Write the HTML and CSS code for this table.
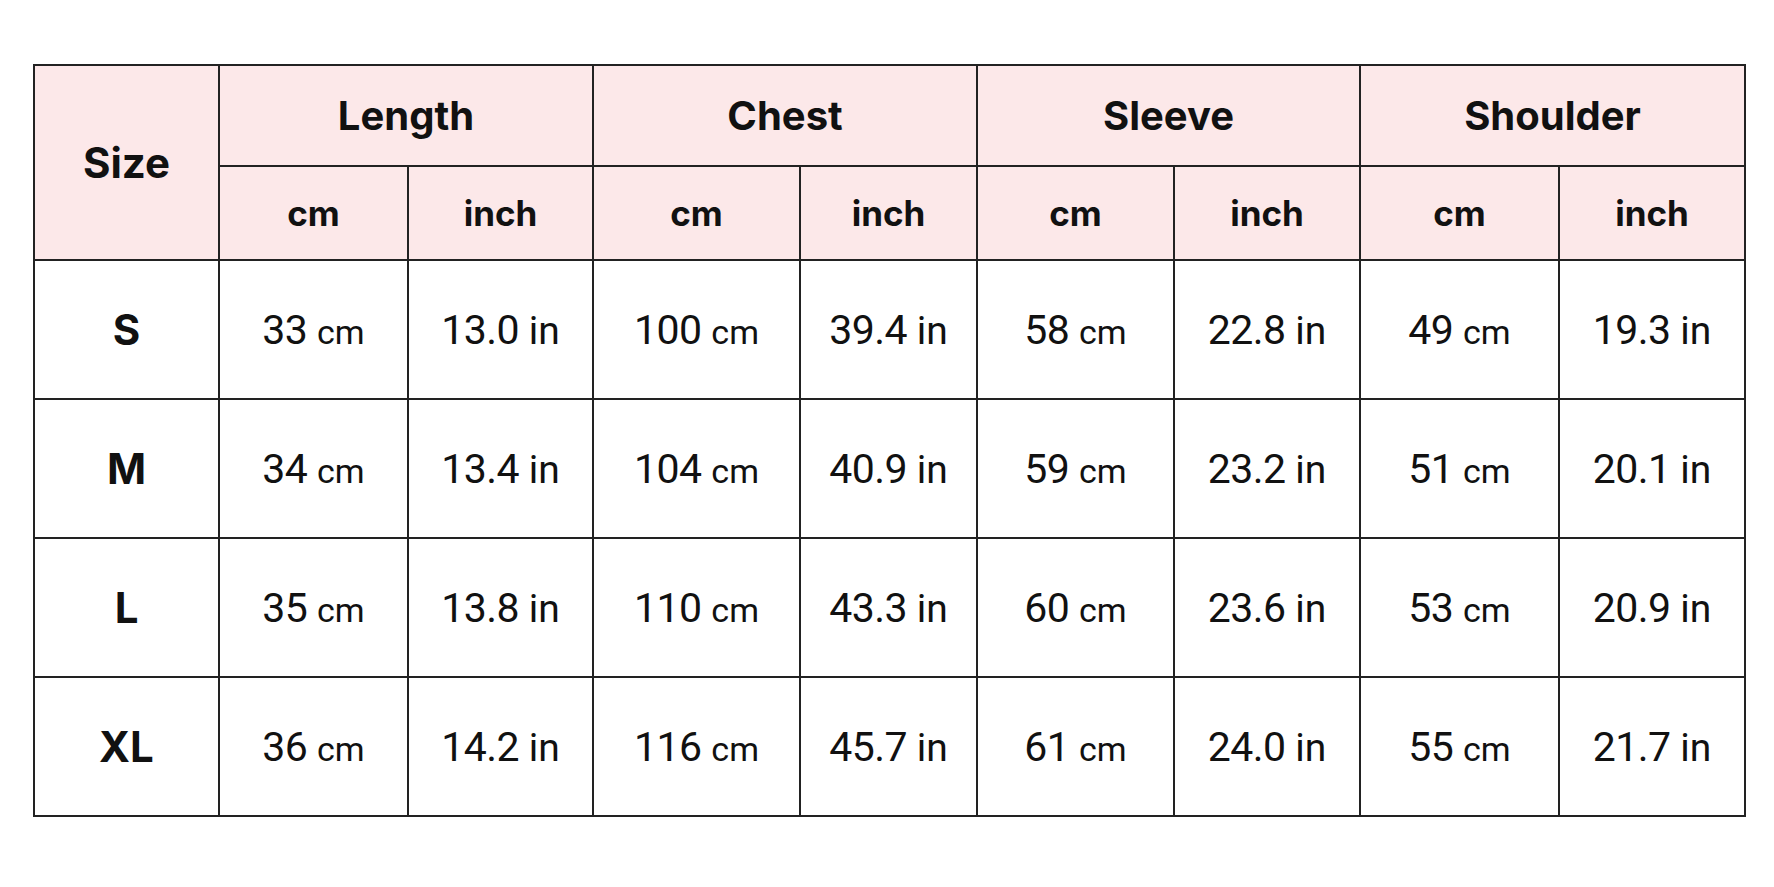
FILE: index.html
```html
<!DOCTYPE html>
<html lang="en">
<head>
<meta charset="utf-8">
<title>Size Chart</title>
<link rel="stylesheet" href="styles.css">
</head>
<body>
<main class="page">
  <table class="size-chart">
    <colgroup>
      <col class="c-size">
      <col class="c-len-cm"><col class="c-len-in">
      <col class="c-chest-cm"><col class="c-chest-in">
      <col class="c-sleeve-cm"><col class="c-sleeve-in">
      <col class="c-sh-cm"><col class="c-sh-in">
    </colgroup>
    <thead>
      <tr class="head-main">
        <th rowspan="2" class="size-head">Size</th>
        <th colspan="2">Length</th>
        <th colspan="2">Chest</th>
        <th colspan="2">Sleeve</th>
        <th colspan="2">Shoulder</th>
      </tr>
      <tr class="head-sub">
        <th>cm</th><th>inch</th>
        <th>cm</th><th>inch</th>
        <th>cm</th><th>inch</th>
        <th>cm</th><th>inch</th>
      </tr>
    </thead>
    <tbody>
      <tr>
        <th class="size">S</th>
        <td>33 <span class="u cm">cm</span></td><td>13.0 <span class="u in">in</span></td>
        <td>100 <span class="u cm">cm</span></td><td>39.4 <span class="u in">in</span></td>
        <td>58 <span class="u cm">cm</span></td><td>22.8 <span class="u in">in</span></td>
        <td>49 <span class="u cm">cm</span></td><td>19.3 <span class="u in">in</span></td>
      </tr>
      <tr>
        <th class="size">M</th>
        <td>34 <span class="u cm">cm</span></td><td>13.4 <span class="u in">in</span></td>
        <td>104 <span class="u cm">cm</span></td><td>40.9 <span class="u in">in</span></td>
        <td>59 <span class="u cm">cm</span></td><td>23.2 <span class="u in">in</span></td>
        <td>51 <span class="u cm">cm</span></td><td>20.1 <span class="u in">in</span></td>
      </tr>
      <tr>
        <th class="size">L</th>
        <td>35 <span class="u cm">cm</span></td><td>13.8 <span class="u in">in</span></td>
        <td>110 <span class="u cm">cm</span></td><td>43.3 <span class="u in">in</span></td>
        <td>60 <span class="u cm">cm</span></td><td>23.6 <span class="u in">in</span></td>
        <td>53 <span class="u cm">cm</span></td><td>20.9 <span class="u in">in</span></td>
      </tr>
      <tr>
        <th class="size">XL</th>
        <td>36 <span class="u cm">cm</span></td><td>14.2 <span class="u in">in</span></td>
        <td>116 <span class="u cm">cm</span></td><td>45.7 <span class="u in">in</span></td>
        <td>61 <span class="u cm">cm</span></td><td>24.0 <span class="u in">in</span></td>
        <td>55 <span class="u cm">cm</span></td><td>21.7 <span class="u in">in</span></td>
      </tr>
    </tbody>
  </table>
</main>
</body>
</html>
```
FILE: styles.css
```css
html, body {
  margin: 0;
  padding: 0;
  background: #ffffff;
}

.page {
  padding: 64px 30px 0 33px;
}

.size-chart {
  border-collapse: collapse;
  table-layout: fixed;
  width: 1711px;
  color: #111111;
}

.c-size { width: 185px; }
.c-len-cm { width: 189px; }
.c-len-in { width: 185px; }
.c-chest-cm { width: 207px; }
.c-chest-in { width: 177px; }
.c-sleeve-cm { width: 197px; }
.c-sleeve-in { width: 186px; }
.c-sh-cm { width: 199px; }
.c-sh-in { width: 186px; }

.size-chart th,
.size-chart td {
  border: 2px solid #222222;
  text-align: center;
  vertical-align: middle;
  padding: 0;
}

.size-chart thead th {
  background: #fce8e9;
  font-family: Inter, "Noto Sans", sans-serif;
  font-weight: 700;
}

.head-main th {
  height: 99px;
  font-size: 40px;
}

.head-main th.size-head {
  font-size: 42px;
}

.head-sub th {
  height: 92px;
  font-size: 35px;
}

.size-chart tbody tr {
  height: 139px;
}

.size-chart tbody th.size {
  font-family: Inter, "Noto Sans", sans-serif;
  font-weight: 700;
  font-size: 42px;
  background: #ffffff;
}

.size-chart td {
  font-family: Roboto, "Liberation Sans", sans-serif;
  font-weight: 400;
  font-size: 41px;
  letter-spacing: -0.5px;
  white-space: nowrap;
}

.size-chart td .u {
  letter-spacing: 0;
}

.size-chart td .cm {
  font-size: 34px;
}

.size-chart td .in {
  font-size: 39px;
}
```
